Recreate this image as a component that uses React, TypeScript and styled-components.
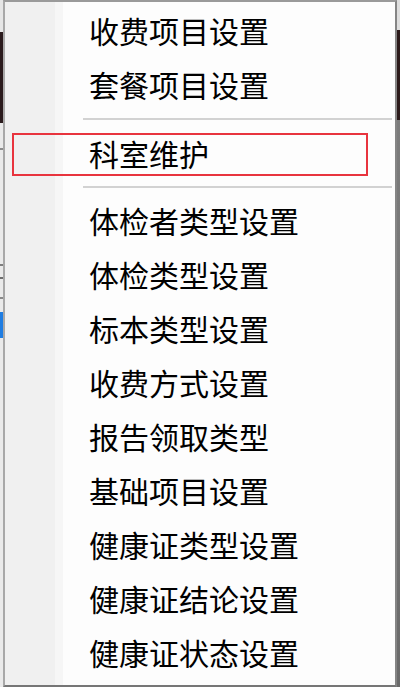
import React from 'react'
import styled, { createGlobalStyle } from 'styled-components'

interface MenuItemProps {
  marked?: boolean
}

const GlobalStyle = createGlobalStyle`
  html, body {
    margin: 0;
    padding: 0;
    background: #ffffff;
  }
`

const Page = styled.div`
  display: flex;
  width: 400px;
  height: 687px;
  overflow: hidden;
`

// slivers of the window behind the popup
const LeftEdge = styled.div`
  width: 3px;
  flex-shrink: 0;
  background: linear-gradient(
    to bottom,
    #e6e6e6 0,
    #e6e6e6 32px,
    #2a1a1c 32px,
    #2a1a1c 123px,
    #eaeaea 123px,
    #eaeaea 148px,
    #8c8c8c 148px,
    #8c8c8c 150px,
    #eaeaea 150px,
    #eaeaea 264px,
    #7e7e7e 264px,
    #7e7e7e 266px,
    #eaeaea 266px,
    #eaeaea 277px,
    #6e6e6e 277px,
    #6e6e6e 279px,
    #eaeaea 279px,
    #eaeaea 297px,
    #8a8a8a 297px,
    #8a8a8a 299px,
    #eaeaea 299px,
    #eaeaea 312px,
    #1f7de2 312px,
    #1f7de2 338px,
    #eaeaea 338px,
    #eaeaea 100%
  );
`

const RightEdge = styled.div`
  width: 3px;
  flex-shrink: 0;
  background: linear-gradient(
    to bottom,
    #dedede 0,
    #dedede 30px,
    #2b1a1a 30px,
    #2b1a1a 120px,
    #7c7c7c 120px,
    #6a6a6a 100%
  );
`

const Menu = styled.div`
  flex: 1;
  display: flex;
  flex-direction: column;
  padding-top: 1px;
  border-top: 2px solid #9a9a9a;
  border-left: 2px solid #a8a8a8;
  border-right: 2px solid #858585;
  border-bottom: 2px solid #767676;
  background: linear-gradient(
    to right,
    #f0f0f0 0,
    #f0f0f0 50px,
    #f6f6f6 50px,
    #f6f6f6 58px,
    #fdfdfd 58px
  );
  font-family: 'Microsoft YaHei', 'Noto Sans CJK SC', sans-serif;
`

const Item = styled.div<MenuItemProps>`
  position: relative;
  display: flex;
  align-items: center;
  height: 54px;
  padding-left: 84px;
  font-size: 30px;
  color: #000000;
  white-space: nowrap;
  cursor: default;
`

const Mark = styled.span`
  position: absolute;
  top: 7px;
  left: 7px;
  width: 356px;
  height: 43px;
  box-sizing: border-box;
  border: 2px solid #e8343e;
  pointer-events: none;
`

const Separator = styled.div<{ size: number }>`
  display: flex;
  align-items: center;
  height: ${(props) => props.size}px;
  padding-left: 78px;
  padding-right: 3px;

  &::after {
    content: '';
    flex: 1;
    height: 2px;
    background: #d2d2d2;
  }
`

const upper = ['收费项目设置', '套餐项目设置']
const lower = [
  '体检者类型设置',
  '体检类型设置',
  '标本类型设置',
  '收费方式设置',
  '报告领取类型',
  '基础项目设置',
  '健康证类型设置',
  '健康证结论设置',
  '健康证状态设置',
]

const App: React.FunctionComponent<{}> = () => {
  return (
    <>
      <GlobalStyle />
      <Page>
        <LeftEdge />
        <Menu>
          {upper.map((label) => (
            <Item key={label}>{label}</Item>
          ))}
          <Separator size={15} />
          <Item marked>
            科室维护
            <Mark />
          </Item>
          <Separator size={13} />
          {lower.map((label) => (
            <Item key={label}>{label}</Item>
          ))}
        </Menu>
        <RightEdge />
      </Page>
    </>
  )
}

export default App
